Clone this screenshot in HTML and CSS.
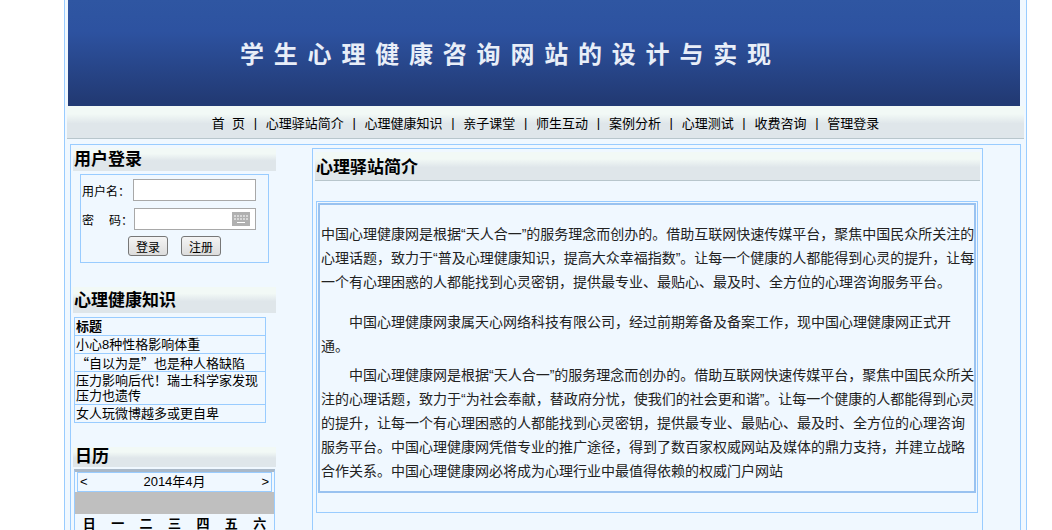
FILE: index.html
```html
<!DOCTYPE html>
<html lang="zh-CN">

<head>
  <meta charset="UTF-8" />
  <title>学生心理健康咨询网站的设计与实现</title>
  <link rel="stylesheet" href="styles.css">
</head>

<body>
  <div class="page">
    <div class="banner">学生心理健康咨询网站的设计与实现</div>
    <div class="nav">
      <a>首&nbsp;&nbsp;页</a><i>|</i><a>心理驿站简介</a><i>|</i><a>心理健康知识</a><i>|</i><a>亲子课堂</a><i>|</i><a>师生互动</a><i>|</i><a>案例分析</a><i>|</i><a>心理测试</a><i>|</i><a>收费咨询</a><i>|</i><a>管理登录</a>
    </div>
    <div class="main">
      <div class="side">
        <h2 class="side-title login-title">用户登录</h2>
        <div class="login">
          <div class="login-row"><label>用户名：</label><div class="field"></div></div>
          <div class="login-row row-pwd"><label>密<span class="sp"></span>码：</label>
            <div class="field pwd">
              <svg width="18" height="14" viewBox="0 0 18 14">
                <rect width="18" height="14" fill="#b0b0b0" />
                <path d="M2 4h14M2 7h14" stroke="#fff" stroke-dasharray="2 1" />
                <path d="M5 10.5h8" stroke="#fff" />
              </svg>
            </div>
          </div>
          <div class="login-btns"><button>登录</button><button>注册</button></div>
        </div>

        <h2 class="side-title know">心理健康知识</h2>
        <table class="news">
          <tr><th>标题</th></tr>
          <tr><td>小心8种性格影响体重</td></tr>
          <tr><td class="cjk-quotes">“自以为是”也是种人格缺陷</td></tr>
          <tr><td>压力影响后代！瑞士科学家发现压力也遗传</td></tr>
          <tr><td>女人玩微博越多或更自卑</td></tr>
        </table>

        <h2 class="side-title cal-title">日历</h2>
        <div class="cal">
          <div class="cal-head"><span>&lt;</span><span>2014年4月</span><span>&gt;</span></div>
          <div class="cal-gap"></div>
          <div class="cal-days"><b>日</b><b>一</b><b>二</b><b>三</b><b>四</b><b>五</b><b>六</b></div>
        </div>
      </div>

      <div class="content">
        <h2 class="content-title">心理驿站简介</h2>
        <div class="article-wrap">
          <div class="article">
            <p class="first">中国心理健康网是根据“天人合一”的服务理念而创办的。借助互联网快速传媒平台，聚焦中国民众所关注的心理话题，致力于“普及心理健康知识，提高大众幸福指数”。让每一个健康的人都能得到心灵的提升，让每一个有心理困惑的人都能找到心灵密钥，提供最专业、最贴心、最及时、全方位的心理咨询服务平台。</p>
            <p class="indent second">中国心理健康网隶属天心网络科技有限公司，经过前期筹备及备案工作，现中国心理健康网正式开通。</p>
            <p class="indent">中国心理健康网是根据“天人合一”的服务理念而创办的。借助互联网快速传媒平台，聚焦中国民众所关注的心理话题，致力于“为社会奉献，替政府分忧，使我们的社会更和谐”。让每一个健康的人都能得到心灵的提升，让每一个有心理困惑的人都能找到心灵密钥，提供最专业、最贴心、最及时、全方位的心理咨询服务平台。中国心理健康网凭借专业的推广途径，得到了数百家权威网站及媒体的鼎力支持，并建立战略合作关系。中国心理健康网必将成为心理行业中最值得依赖的权威门户网站</p>
          </div>
        </div>
      </div>
    </div>
  </div>
</body>

</html>
```

FILE: styles.css
```css
html,
body {
  margin: 0;
  padding: 0;
  height: 530px;
  overflow: hidden;
  background-color: #ffffff;
  font-family: "Liberation Sans", "Noto Sans CJK SC", sans-serif;
  font-size: 13px;
  color: #000000;
}

.page {
  width: 961px;
  height: 530px;
  margin-left: 64px;
  border-left: 1px solid #99ccff;
  border-right: 1px solid #99ccff;
  background-color: #f0f8ff;
}

.banner {
  height: 106px;
  margin: 0 6px 0 3px;
  box-sizing: border-box;
  padding: 35px 0 0 172px;
  background: linear-gradient(#2f56a2, #2d52a0 30%, #223a74 95%);
  color: #e8eef8;
  font-family: "Noto Sans CJK SC", sans-serif;
  font-size: 24px;
  font-weight: 700;
  letter-spacing: 9.8px;
  line-height: 36px;
  white-space: nowrap;
}

.nav {
  height: 32px;
  margin: 0 2px;
  display: flex;
  justify-content: center;
  align-items: center;
  gap: 8.7px;
  border-bottom: 1px solid #b8c6cc;
  background: linear-gradient(#f2f9f6, #f2f9f6 25%, #dfe6ea 55%, #dfe6ea);
  font-size: 13px;
}

.nav i {
  font-style: normal;
}

.main {
  display: flex;
  align-items: flex-start;
  height: 400px;
  margin: 5px 5px 0 5px;
  border: 1px solid #99ccff;
  border-bottom: 0;
}

.side {
  width: 203px;
  margin-left: 2px;
  margin-top: 3px;
  flex-shrink: 0;
}

.side-title {
  margin: 0;
  height: 23px;
  font-size: 17px;
  font-weight: 700;
  line-height: 23px;
  padding-left: 1px;
  background: linear-gradient(#f2f9f6, #f2f9f6 25%, #dfe6ea 55%, #dfe6ea);
}

.login {
  width: 187px;
  height: 87px;
  margin: 3px 0 0 7px;
  border: 1px solid #99ccff;
  font-size: 12px;
}

.login-row {
  display: flex;
  align-items: center;
  margin: 4px 0 0 1px;
  height: 22px;
}

.row-pwd {
  margin-top: 7px;
}

.login-row label {
  width: 51px;
  flex-shrink: 0;
}

.row-pwd label {
  width: 52px;
}

.sp {
  display: inline-block;
  width: 15px;
}

.field {
  flex: 1;
  height: 22px;
  margin-right: 12px;
  box-sizing: border-box;
  border: 1px solid #a8a8a8;
  background: #ffffff;
}

.pwd {
  display: flex;
  justify-content: flex-end;
  align-items: center;
  padding-right: 5px;
}

.login-btns {
  display: flex;
  gap: 13px;
  margin: 6px 0 0 47px;
}

.login-btns button {
  width: 40px;
  height: 20px;
  padding: 0;
  border: 1px solid #777777;
  border-radius: 3px;
  background: linear-gradient(#f4f4f4, #dcdcdc);
  font: inherit;
}

.know {
  height: 26px;
  margin-top: 24px;
  line-height: 28px;
}

.news {
  width: 192px;
  margin: 4px 0 0 1px;
  border-collapse: collapse;
  font-size: 13px;
  line-height: 15px;
}

.news th,
.news td {
  border: 1px solid #99ccff;
  padding: 1px;
  text-align: left;
}

.cjk-quotes {
  font-family: "Noto Sans CJK SC", sans-serif;
}

.cal-title {
  height: 20px;
  margin-top: 24px;
  line-height: 20px;
  padding-left: 2px;
}

.cal {
  width: 201px;
  margin: 2px 0 0 1px;
  border: 1px solid #99ccff;
  border-top: 3px solid #a9b8c8;
  border-bottom: 0;
  box-sizing: border-box;
  font-size: 13px;
}

.cal-head {
  display: flex;
  justify-content: space-between;
  margin: 0 2px;
  padding: 0 2px;
  height: 18px;
  line-height: 17px;
  border: 1px solid #99ccff;
}

.cal-gap {
  height: 22px;
  background: #bfbfbf;
}

.cal-days {
  display: grid;
  grid-template-columns: repeat(7, 1fr);
  justify-items: center;
  height: 19px;
  line-height: 19px;
}

.content {
  width: 671px;
  height: 400px;
  box-sizing: border-box;
  margin-left: 36px;
  margin-top: 3px;
  padding: 3px 2px 0 2px;
  border: 1px solid #99ccff;
  border-bottom: 0;
}

.content-title {
  margin: 0;
  height: 29px;
  padding-left: 1px;
  border-bottom: 1px solid #b8c6cc;
  box-sizing: border-box;
  font-size: 17px;
  font-weight: 700;
  line-height: 31px;
  background: linear-gradient(#f2f9f6, #f2f9f6 25%, #dfe6ea 55%, #dfe6ea);
}

.article-wrap {
  margin: 20px 2px 0 1px;
  height: 312px;
  box-sizing: border-box;
  padding: 1px;
  border: 1px solid #99ccff;
}

.article {
  height: 290px;
  box-sizing: border-box;
  padding: 17px 0 0 1px;
  border: 2px solid #99c2f0;
  font-size: 14px;
  line-height: 24px;
  color: #222222;
}

.article p {
  width: 655px;
  margin: 0;
}

.article .first {
  margin-bottom: 16px;
}

.article .second {
  margin-bottom: 5px;
}

.indent {
  text-indent: 28px;
}
```
